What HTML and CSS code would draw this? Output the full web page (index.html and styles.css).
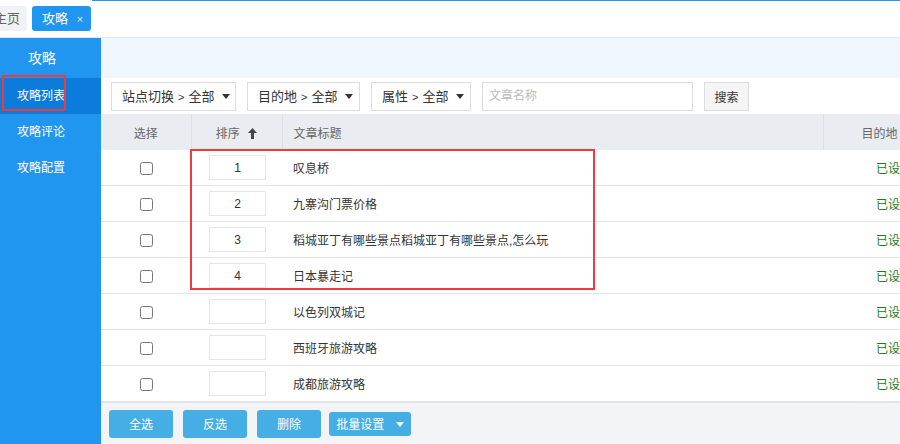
FILE: index.html
```html
<!DOCTYPE html>
<html lang="zh-CN">

<head>
    <meta charset="UTF-8">
    <title>攻略列表</title>
    <link rel="stylesheet" href="styles.css">
</head>

<body>
    <div class="tabbar">
        <div class="tab tab-home">主页</div>
        <div class="tab tab-active">攻略 <span class="tab-close">×</span></div>
        <div class="tab-rest"></div>
    </div>

    <div class="layout">
        <div class="sidebar">
            <div class="side-title">攻略</div>
            <a class="side-item active" href="#">攻略列表</a>
            <a class="side-item" href="#">攻略评论</a>
            <a class="side-item" href="#">攻略配置</a>
            <div class="mark mark-side"></div>
        </div>

        <div class="content">
            <div class="strip"></div>

            <div class="filters">
                <div class="select sel-site">站点切换<span class="gt">&gt;</span>全部<span class="caret"></span></div>
                <div class="select sel-dest">目的地<span class="gt">&gt;</span>全部<span class="caret"></span></div>
                <div class="select sel-attr">属性<span class="gt">&gt;</span>全部<span class="caret"></span></div>
                <input class="search-input" type="text" placeholder="文章名称">
                <button class="search-btn">搜索</button>
            </div>

            <div class="table-wrap">
                <table class="list">
                    <colgroup>
                        <col style="width:90px">
                        <col style="width:91px">
                        <col style="width:541px">
                        <col style="width:120px">
                    </colgroup>
                    <thead>
                        <tr>
                            <th>选择</th>
                            <th>排序
                                <svg class="up" width="9" height="11" viewBox="0 0 9 11">
                                    <path d="M4.5 0 L9 5 L6 5 L6 11 L3 11 L3 5 L0 5 Z" fill="#444"/>
                                </svg>
                            </th>
                            <th class="th-title">文章标题</th>
                            <th class="th-dest">目的地</th>
                        </tr>
                    </thead>
                    <tbody>
                        <tr>
                            <td class="c"><input type="checkbox"></td>
                            <td><input class="order" type="text" value="1"></td>
                            <td class="title">叹息桥</td>
                            <td class="dest">已设置</td>
                        </tr>
                        <tr>
                            <td class="c"><input type="checkbox"></td>
                            <td><input class="order" type="text" value="2"></td>
                            <td class="title">九寨沟门票价格</td>
                            <td class="dest">已设置</td>
                        </tr>
                        <tr>
                            <td class="c"><input type="checkbox"></td>
                            <td><input class="order" type="text" value="3"></td>
                            <td class="title">稻城亚丁有哪些景点稻城亚丁有哪些景点,怎么玩</td>
                            <td class="dest">已设置</td>
                        </tr>
                        <tr>
                            <td class="c"><input type="checkbox"></td>
                            <td><input class="order" type="text" value="4"></td>
                            <td class="title">日本暴走记</td>
                            <td class="dest">已设置</td>
                        </tr>
                        <tr>
                            <td class="c"><input type="checkbox"></td>
                            <td><input class="order" type="text" value=""></td>
                            <td class="title">以色列双城记</td>
                            <td class="dest">已设置</td>
                        </tr>
                        <tr>
                            <td class="c"><input type="checkbox"></td>
                            <td><input class="order" type="text" value=""></td>
                            <td class="title">西班牙旅游攻略</td>
                            <td class="dest">已设置</td>
                        </tr>
                        <tr>
                            <td class="c"><input type="checkbox"></td>
                            <td><input class="order" type="text" value=""></td>
                            <td class="title">成都旅游攻略</td>
                            <td class="dest">已设置</td>
                        </tr>
                    </tbody>
                </table>
                <div class="mark mark-table"></div>
            </div>

            <div class="actions">
                <button class="btn">全选</button>
                <button class="btn">反选</button>
                <button class="btn">删除</button>
                <button class="btn btn-small">批量设置 <span class="caret caret-white"></span></button>
            </div>
        </div>
    </div>
</body>

</html>
```

FILE: styles.css
```css
body {
    font-family: "Liberation Sans", "Noto Sans CJK SC", sans-serif;
    font-size: 12px;
    color: #333;
    margin: 0;
    padding: 0;
    width: 900px;
    height: 444px;
    overflow: hidden;
}

/* top tabs */
.tabbar {
    display: flex;
    height: 37px;
    border-bottom: 1px solid #e3e7ec;
    background-color: #fff;
}

.tab {
    height: 25px;
    line-height: 25px;
    margin-top: 6px;
    border-radius: 3px;
    font-size: 13px;
}

.tab-home {
    width: 27px;
    background-color: #f0f2f6;
    color: #666;
    text-indent: -6px;
    overflow: hidden;
    border-radius: 0 3px 3px 0;
}

.tab-active {
    width: 59px;
    margin-left: 5px;
    background-color: #2196f0;
    color: #fff;
    padding-left: 10px;
    box-sizing: border-box;
}

.tab-close {
    font-size: 11px;
    margin-left: 5px;
    opacity: 0.85;
}

.tab-rest {
    flex: 1;
    border-top: 1px solid #2196f0;
    margin-left: 1px;
}

.layout {
    display: flex;
    height: 406px;
}

/* sidebar */
.sidebar {
    position: relative;
    width: 101px;
    flex-shrink: 0;
    background-color: #2196f0;
}

.side-title {
    height: 40px;
    line-height: 40px;
    padding-left: 28px;
    color: #fff;
    font-size: 14px;
}

.side-item {
    display: block;
    height: 36px;
    line-height: 36px;
    padding-left: 17px;
    color: #fff;
    text-decoration: none;
    font-size: 12px;
}

.side-item.active {
    background-color: #0b7bdc;
}

/* annotation boxes */
.mark {
    position: absolute;
    border: 2px solid #f23a3a;
    box-sizing: border-box;
    pointer-events: none;
}

.mark-side {
    left: 2px;
    top: 37px;
    width: 64px;
    height: 36px;
}

.mark-table {
    left: 89px;
    top: 35px;
    width: 405px;
    height: 141px;
}

/* content */
.content {
    flex: 1;
    display: flex;
    flex-direction: column;
    overflow: hidden;
}

.strip {
    height: 40px;
    background-color: #eff6fd;
}

.filters {
    display: flex;
    align-items: center;
    gap: 11px;
    height: 36px;
    padding-left: 10px;
    background-color: #fff;
}

.select {
    height: 29px;
    line-height: 27px;
    border: 1px solid #dcdcdc;
    box-sizing: border-box;
    padding-left: 10px;
    font-size: 13px;
    color: #333;
    white-space: nowrap;
    overflow: hidden;
}

.sel-site {
    width: 125px;
}

.sel-dest {
    width: 113px;
}

.sel-attr {
    width: 100px;
}

.gt {
    font-size: 11px;
    margin: 0 4px;
}

.caret {
    display: inline-block;
    width: 0;
    height: 0;
    border-left: 4px solid transparent;
    border-right: 4px solid transparent;
    border-top: 5px solid #333;
    margin-left: 8px;
    vertical-align: 2px;
}

.caret-white {
    border-top-color: #fff;
}

.search-input {
    width: 211px;
    height: 29px;
    border: 1px solid #dcdcdc;
    box-sizing: border-box;
    padding: 0 6px;
    font-family: inherit;
    font-size: 12px;
}

.search-input::placeholder {
    color: #bbb;
}

.search-btn {
    width: 45px;
    height: 29px;
    border: 1px solid #dcdcdc;
    background-color: #f5f5f5;
    font-family: inherit;
    font-size: 12px;
    color: #333;
    padding: 0;
}

/* table */
.table-wrap {
    position: relative;
    height: 288px;
    overflow: hidden;
}

.list {
    border-collapse: collapse;
    table-layout: fixed;
    width: 842px;
}

.list th {
    height: 36px;
    background-color: #e9ecf0;
    color: #666;
    font-weight: normal;
    font-size: 12px;
    border-right: 1px solid #dde1e6;
    padding: 0;
    text-align: center;
}

.list th.th-title {
    text-align: left;
    padding-left: 11px;
}

.list th.th-dest {
    text-align: left;
    padding-left: 38px;
}

.up {
    margin-left: 5px;
    vertical-align: -1px;
}

.list td {
    height: 35px;
    border-bottom: 1px solid #e1e5ea;
    padding: 0;
}

.list td.c {
    text-align: center;
}

.list td.title {
    padding-left: 11px;
}

.list td.dest {
    padding-left: 53px;
    color: #1a7a1a;
}

.list input[type="checkbox"] {
    width: 13px;
    height: 13px;
    margin: 0;
    vertical-align: middle;
}

.order {
    display: block;
    width: 57px;
    height: 25px;
    margin-left: 18px;
    border: 1px solid #e6e6e6;
    box-sizing: border-box;
    text-align: center;
    font-family: inherit;
    font-size: 12px;
    color: #333;
    padding: 0;
}

/* bottom bar */
.actions {
    flex: 1;
    display: flex;
    align-items: center;
    gap: 10px;
    padding-left: 8px;
    background-color: #f3f4f8;
    border-top: 1px solid #e1e5ea;
}

.btn {
    width: 64px;
    height: 28px;
    border: none;
    border-radius: 3px;
    background-color: #45aee4;
    color: #fff;
    font-family: inherit;
    font-size: 12px;
    padding: 0;
}

.btn-small {
    width: 82px;
    height: 24px;
    margin-left: -2px;
}
```
